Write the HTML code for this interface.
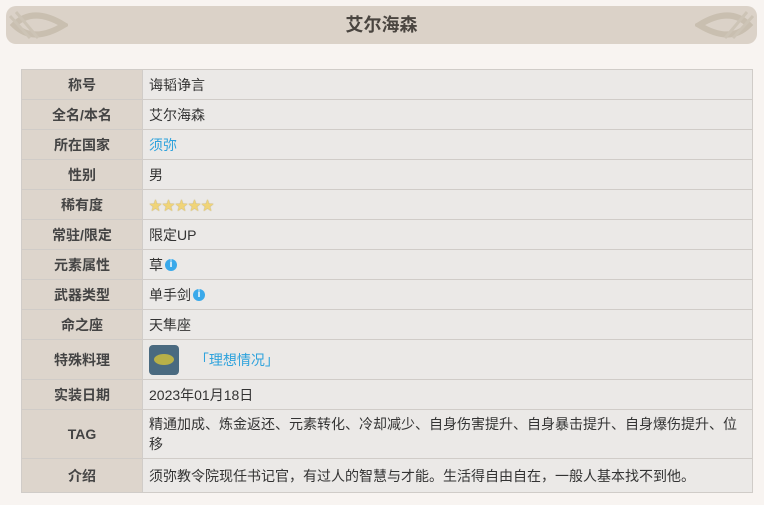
<!DOCTYPE html>
<html><head><meta charset="utf-8"><style>
body{margin:0;width:764px;height:505px;background:#f8f4f1;font-family:"Liberation Sans","Noto Sans CJK SC",sans-serif;color:#333;overflow:hidden;position:relative}
.hdr{position:absolute;left:6px;top:6px;width:751px;height:38px;background:#dbd2c8;border-radius:10px;text-align:center;line-height:38px;font-size:18px;font-weight:bold;color:#4a4540}
.orn{position:absolute;top:2px}
table{position:absolute;left:21px;top:69px;width:732px;border-collapse:collapse;font-size:14px}
td{border:1px solid #d0ccc8;height:29px;padding:0 6px;background:#ebe9e7}
td.l{width:108px;background:#ddd5cc;text-align:center;font-weight:bold;color:#444}
a{color:#2ea2dc;text-decoration:none}
.i{display:inline-block;width:12px;height:12px;border-radius:50%;background:#3aa9ea;color:#fff;font-size:10px;line-height:12px;text-align:center;font-weight:bold;vertical-align:middle;margin-left:2px;position:relative;top:-1px}
.st{color:#f0d478;font-size:13px;letter-spacing:0;text-shadow:0 0 1px #a08020}
</style></head><body>
<div class="hdr">艾尔海森
<svg class="orn" style="left:2px" width="60" height="34"><path d="M6 17 Q25 -2 56 17 Q25 36 6 17Z" fill="none" stroke="#c9bfb0" stroke-width="6"/><path d="M2 8 L22 30 M8 4 L30 30" stroke="#cdc4b6" stroke-width="3"/></svg>
<svg class="orn" style="right:2px" width="60" height="34"><path d="M54 17 Q35 -2 4 17 Q35 36 54 17Z" fill="none" stroke="#c9bfb0" stroke-width="6"/><path d="M58 8 L38 30 M52 4 L30 30" stroke="#cdc4b6" stroke-width="3"/></svg>
</div>
<table>
<tr><td class="l">称号</td><td>诲韬诤言</td></tr>
<tr><td class="l">全名/本名</td><td>艾尔海森</td></tr>
<tr><td class="l">所在国家</td><td><a>须弥</a></td></tr>
<tr><td class="l">性别</td><td>男</td></tr>
<tr><td class="l">稀有度</td><td><span class="st">★★★★★</span></td></tr>
<tr><td class="l">常驻/限定</td><td>限定UP</td></tr>
<tr><td class="l">元素属性</td><td>草<span class="i">i</span></td></tr>
<tr><td class="l">武器类型</td><td>单手剑<span class="i">i</span></td></tr>
<tr><td class="l">命之座</td><td>天隼座</td></tr>
<tr><td class="l" style="height:39px">特殊料理</td><td><span style="display:inline-block;width:30px;height:30px;border-radius:4px;background:#4a6a80;vertical-align:middle;position:relative"><span style="position:absolute;left:5px;top:9px;width:20px;height:11px;border-radius:50%;background:#b8b048"></span></span> <a style="margin-left:12px;vertical-align:middle">「理想情况」</a></td></tr>
<tr><td class="l">实装日期</td><td>2023年01月18日</td></tr>
<tr><td class="l" style="height:48px">TAG</td><td style="line-height:20px">精通加成、炼金返还、元素转化、冷却减少、自身伤害提升、自身暴击提升、自身爆伤提升、位移</td></tr>
<tr><td class="l" style="height:33px">介绍</td><td>须弥教令院现任书记官，有过人的智慧与才能。生活得自由自在，一般人基本找不到他。</td></tr>
</table>
</body></html>
